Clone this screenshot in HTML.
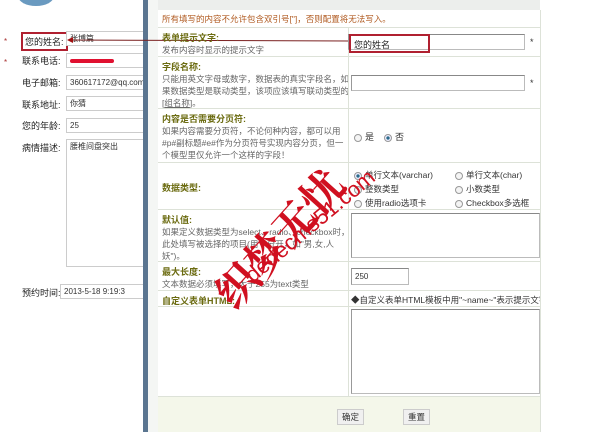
<!DOCTYPE html>
<html><head><meta charset="utf-8"><style>
*{margin:0;padding:0;box-sizing:border-box}
body{width:600px;height:432px;overflow:hidden;background:#fff;font-family:"Liberation Sans","Noto Sans CJK SC",sans-serif;font-size:9px;color:#333;position:relative}
.a{position:absolute}
.lab{position:absolute;left:22px;font-size:9px;color:#222}
.inp{position:absolute;left:66px;width:78px;height:15px;border:1px solid #ccc;border-right:none;background:#fff;font-size:8px;padding:2px 3px;line-height:10px}
.row{position:absolute;left:158px;width:382px;border-bottom:1px solid #dde2d8}
.t{color:#6b6b10;font-weight:bold;font-size:9px}
.d{color:#666;font-size:8.5px;line-height:12px}
.box{position:absolute;border:1px solid #bbb;border-top-color:#888;border-left-color:#999;background:#fff}
.rad{display:inline-block;width:8px;height:8px;border:1px solid #999;border-radius:50%;vertical-align:middle;margin-right:3px;background:#f4f4f4}
.on{background:radial-gradient(#2a6a8a 35%,#eef 45%)}
</style></head><body>
<div class="a" style="left:18px;top:-14px;width:36px;height:20px;border-radius:50%;background:#6a9ac0"></div>
<div class="a" style="left:4px;top:37px;color:#a33;font-size:8px">*</div>
<div class="a" style="left:4px;top:58px;color:#a33;font-size:8px">*</div>
<div class="lab" style="top:32px;left:21px;border:2px solid #b02030;padding:1px 2px">您的姓名:</div>
<div class="lab" style="top:54px">联系电话:</div>
<div class="lab" style="top:76px">电子邮箱:</div>
<div class="lab" style="top:98px">联系地址:</div>
<div class="lab" style="top:119px">您的年龄:</div>
<div class="lab" style="top:141px">病情描述:</div>
<div class="lab" style="top:286px">预约时间:</div>
<div class="inp" style="top:31px">张博篇</div>
<div class="inp" style="top:53px"><span style="display:inline-block;width:44px;height:4px;background:#e01030;border-radius:2px"></span></div>
<div class="inp" style="top:75px">360617172@qq.com</div>
<div class="inp" style="top:96px">你猜</div>
<div class="inp" style="top:118px">25</div>
<div class="inp" style="top:139px;height:128px">腰椎间盘突出</div>
<div class="inp" style="top:284px;left:60px;width:84px">2013-5-18 9:19:3</div>
<div class="a" style="left:143px;top:0;width:5px;height:432px;background:#5a7590"></div>
<div class="a" style="left:148px;top:0;width:10px;height:432px;background:#f4f6f4"></div>
<div class="a" style="left:158px;top:0;width:382px;height:10px;background:#eceeec"></div>
<div class="a" style="left:68px;top:40px;width:282px;height:1px;background:#7a2020;transform:rotate(0.2deg)"></div>
<div class="a" style="left:64px;top:37px;width:0;height:0;border:3px solid transparent;border-right:6px solid #a01010"></div>
<div class="row" style="top:10px;height:18px;padding:3px 4px;color:#b05a20;font-size:8.5px">所有填写的内容不允许包含双引号["]，否则配置将无法写入。</div>
<div class="row" style="top:28px;height:29px;padding:3px 4px"><div class="t">表单提示文字:</div><div class="d">发布内容时显示的提示文字</div></div>
<div class="row" style="top:57px;height:52px;padding:3px 4px"><div class="t">字段名称:</div><div class="d" style="width:188px">只能用英文字母或数字，数据表的真实字段名，如果数据类型是联动类型，该项应该填写联动类型的[<u>组名称</u>]。</div></div>
<div class="row" style="top:109px;height:54px;padding:3px 4px"><div class="t">内容是否需要分页符:</div><div class="d" style="width:188px">如果内容需要分页符，不论何种内容，都可以用#p#副标题#e#作为分页符号实现内容分页，但一个模型里仅允许一个这样的字段！</div></div>
<div class="row" style="top:163px;height:47px;padding:18px 4px"><div class="t">数据类型:</div></div>
<div class="row" style="top:210px;height:52px;padding:3px 4px"><div class="t">默认值:</div><div class="d" style="width:188px">如果定义数据类型为select、radio、checkbox时，此处填写被选择的项目(用","分开，如"男,女,人妖")。</div></div>
<div class="row" style="top:262px;height:29px;padding:3px 4px"><div class="t">最大长度:</div><div class="d">文本数据必须填写，大于255为text类型</div></div>
<div class="row" style="top:291px;height:16px;padding:3px 4px"><div class="t">自定义表单HTML:</div></div>
<div class="row" style="top:307px;height:90px"></div>
<div class="a" style="left:348px;top:28px;width:1px;height:369px;background:#dde2d8"></div>
<div class="a" style="left:540px;top:10px;width:1px;height:422px;background:#dde2d8"></div>
<div class="a" style="left:158px;top:397px;width:382px;height:35px;background:#f4f7ea"></div>
<div class="box" style="left:348px;top:34px;width:177px;height:16px"></div>
<div class="a" style="left:349px;top:34px;width:81px;height:19px;border:2px solid #b02030;padding:2px 3px;font-size:9px;color:#222">您的姓名</div>
<div class="a" style="left:530px;top:37px">*</div>
<div class="box" style="left:351px;top:75px;width:174px;height:16px"></div>
<div class="a" style="left:530px;top:78px">*</div>
<div class="a" style="left:354px;top:130px;font-size:9px"><span class="rad"></span>是 &nbsp;&nbsp;&nbsp;<span class="rad on"></span>否</div>
<div class="a" style="left:354px;top:168px;font-size:8.5px;line-height:14px">
<div><span class="rad on"></span>单行文本(varchar)</div><div><span class="rad"></span>整数类型</div><div><span class="rad"></span>使用radio选项卡</div></div>
<div class="a" style="left:455px;top:168px;font-size:8.5px;line-height:14px">
<div><span class="rad"></span>单行文本(char)</div><div><span class="rad"></span>小数类型</div><div><span class="rad"></span>Checkbox多选框</div></div>
<div class="box" style="left:351px;top:213px;width:189px;height:45px"></div>
<div class="box" style="left:351px;top:268px;width:58px;height:17px;font-size:8px;padding:3px">250</div>
<div class="a" style="left:351px;top:294px;font-size:8.5px;white-space:nowrap;width:189px;overflow:hidden">◆自定义表单HTML模板中用"~name~"表示提示文字，"~fo</div>
<div class="box" style="left:351px;top:309px;width:189px;height:85px"></div>
<div class="a" style="left:337px;top:409px;border:1px solid #ccc;background:#f0f0f0;padding:1px 4px;font-size:8.5px">确定</div>
<div class="a" style="left:403px;top:409px;border:1px solid #ccc;background:#f0f0f0;padding:1px 4px;font-size:8.5px">重置</div>
<div class="a" style="left:200px;top:280px;color:#d01020;font-size:42px;font-weight:bold;transform:rotate(-48deg);transform-origin:left top;white-space:nowrap;font-family:'Noto Serif CJK SC',serif">织梦无忧</div>
<div class="a" style="left:240px;top:268px;color:#d01020;font-size:22px;transform:rotate(-40deg);transform-origin:left top;white-space:nowrap">dedecms51.com</div>
</body></html>
